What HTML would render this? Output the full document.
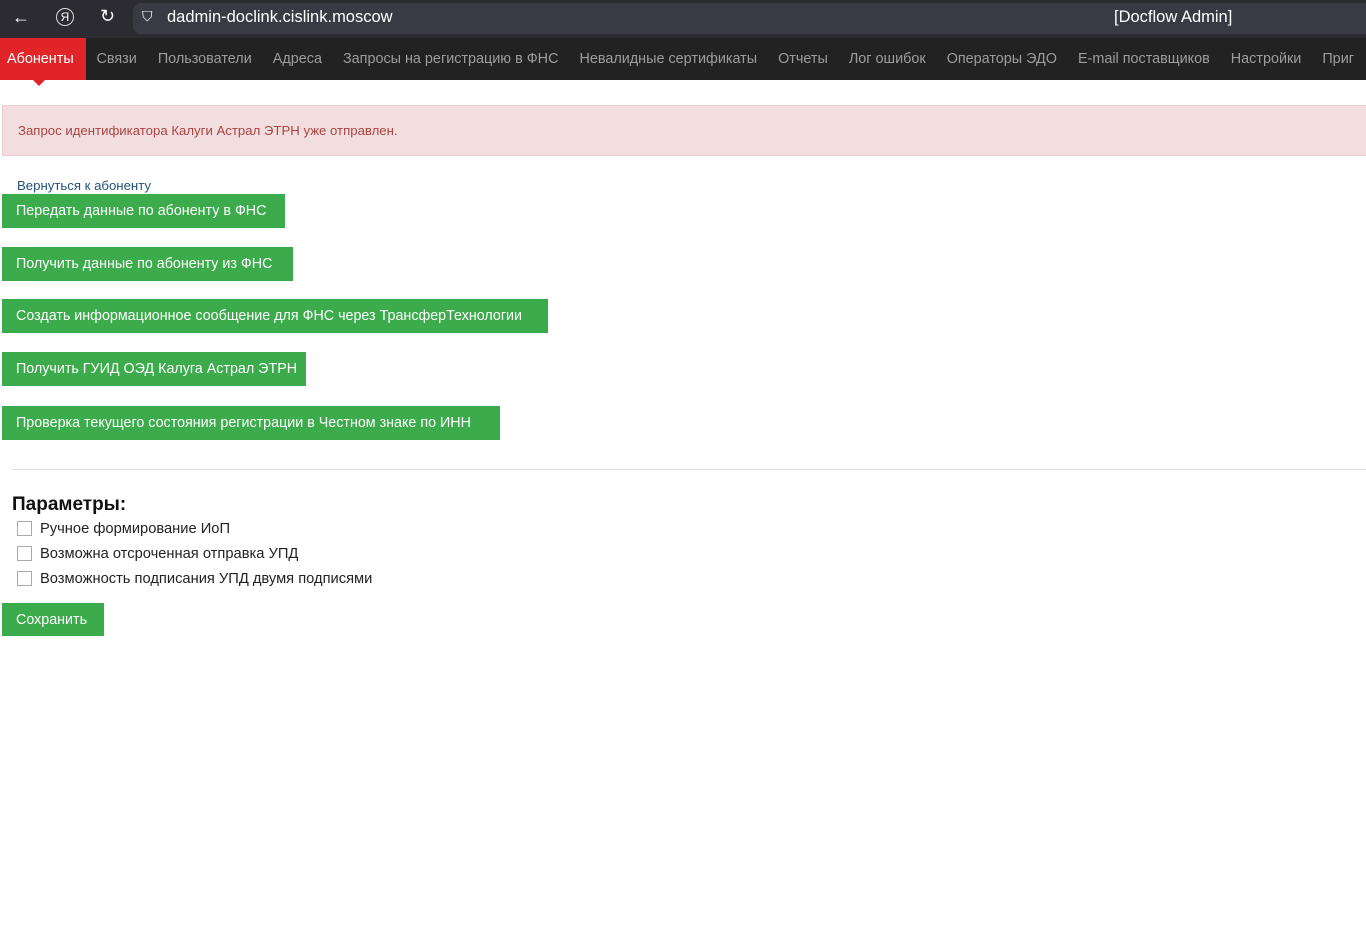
<!DOCTYPE html>
<html><head><meta charset="utf-8"><style>
body{margin:0;width:1366px;height:936px;background:#fff;font-family:"Liberation Sans",sans-serif;overflow:hidden;position:relative}
.top{position:absolute;left:0;top:0;width:1366px;height:38px;background:#2b2b31}
.url{position:absolute;left:133px;top:3px;width:1240px;height:31px;background:#3a3a44;border-radius:8px}
.top span{position:absolute;color:#fff;font-size:16.5px;top:8px}
.nav{position:absolute;top:38px;left:0;width:1366px;height:42px;background:#222;white-space:nowrap;font-size:0}
.nav a{display:inline-block;height:42px;line-height:43px;padding:0 10.5px;color:#9d9d9d;font-size:14.4px;text-decoration:none}
.nav a.act{background:#e02427;color:#fff;padding:0 7px;width:72px;position:relative}
.nav a.act:after{content:"";position:absolute;left:33px;bottom:-6px;border-left:6px solid transparent;border-right:6px solid transparent;border-top:6px solid #e02427}
.alert{position:absolute;left:2px;top:105px;width:1370px;background:#f2dede;border:1px solid #ebccd1;color:#a94442;font-size:13.2px;line-height:49px;box-sizing:border-box;padding-left:15px;height:51px}
.back{position:absolute;left:17px;top:178px;color:#23527c;font-size:13.2px}
.btn{position:absolute;left:2px;height:34px;line-height:35px;background:#3cab4b;color:#fff;font-size:14.3px;padding:0 14px;box-sizing:border-box;white-space:nowrap}
hr{position:absolute;left:12px;top:469px;width:1360px;margin:0;border:0;border-top:1px solid #ddd}
h3{position:absolute;left:12px;top:494px;margin:0;font-size:19px;color:#111}
.cb{position:absolute;left:17px;font-size:14.7px;color:#222}
.cb i{display:inline-block;width:13px;height:13px;border:1px solid #aaa;vertical-align:-3px;margin-right:8px}
</style></head><body>
<div class="top"><div class="url"></div>
<span style="left:12px;top:7px;font-size:18px">←</span>
<span style="left:56px;top:8px;width:16px;height:16px;border:1.5px solid #ddd;border-radius:50%;font-size:12px;text-align:center;line-height:16px">Я</span>
<span style="left:100px;top:6px;font-size:18px">↻</span>
<span style="left:142px;top:8px;font-size:14px">⛉</span>
<span style="left:167px">dadmin-doclink.cislink.moscow</span>
<span style="left:1114px">[Docflow Admin]</span></div>
<div class="nav"><a class="act">Абоненты</a><a>Связи</a><a>Пользователи</a><a>Адреса</a><a>Запросы на регистрацию в ФНС</a><a>Невалидные сертификаты</a><a>Отчеты</a><a>Лог ошибок</a><a>Операторы ЭДО</a><a>E-mail поставщиков</a><a>Настройки</a><a>Приг</a></div>
<div class="alert">Запрос идентификатора Калуги Астрал ЭТРН уже отправлен.</div>
<div class="back">Вернуться к абоненту</div>
<div class="btn" style="top:194px;width:283px">Передать данные по абоненту в ФНС</div>
<div class="btn" style="top:247px;width:291px">Получить данные по абоненту из ФНС</div>
<div class="btn" style="top:299px;width:546px">Создать информационное сообщение для ФНС через ТрансферТехнологии</div>
<div class="btn" style="top:352px;width:304px">Получить ГУИД ОЭД Калуга Астрал ЭТРН</div>
<div class="btn" style="top:406px;width:498px">Проверка текущего состояния регистрации в Честном знаке по ИНН</div>
<hr>
<h3>Параметры:</h3>
<div class="cb" style="top:521px"><i></i>Ручное формирование ИоП</div>
<div class="cb" style="top:546px"><i></i>Возможна отсроченная отправка УПД</div>
<div class="cb" style="top:571px"><i></i>Возможность подписания УПД двумя подписями</div>
<div class="btn" style="top:603px;width:102px;height:33px">Сохранить</div>
</body></html>
